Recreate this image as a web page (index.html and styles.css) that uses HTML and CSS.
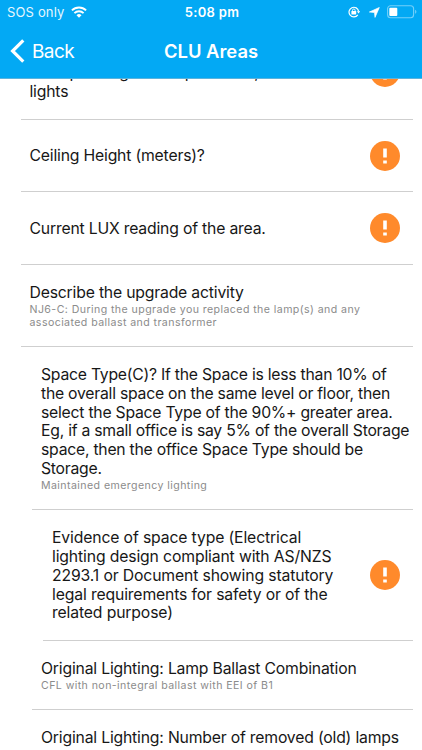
FILE: index.html
```html
<!DOCTYPE html>
<html lang="en">
<head>
    <meta charset="UTF-8">
    <meta name="viewport" content="width=device-width, initial-scale=1.0">
    <title>CLU Areas</title>
    <link rel="stylesheet" href="styles.css">
</head>
<body>

    <div class="screen">
        <header class="top">
            <div class="status-bar">
                <div class="status-left">
                    <span class="carrier">SOS only</span>
                    <svg class="wifi" width="16" height="12" viewBox="0 0 16 12">
                        <g fill="none" stroke="#fff" stroke-width="1.9">
                            <path d="M.9 4.4a10.2 10.2 0 0 1 14.2 0"/>
                            <path d="M3.4 7.1a6.6 6.6 0 0 1 9.2 0"/>
                        </g>
                        <path d="M8 11.8 5.5 9.2a3.6 3.6 0 0 1 5 0z" fill="#fff"/>
                    </svg>
                </div>
                <span class="clock">5:08 pm</span>
                <div class="status-right">
                    <svg width="12" height="12" viewBox="0 0 12 12">
                        <path d="M9.8 8.8A4.8 4.8 0 1 1 10.6 5.4" fill="none" stroke="#fff" stroke-width="1.2"/>
                        <path d="M8.9 5.3h3.2L10.5 7.5z" fill="#fff"/>
                        <rect x="3.4" y="5.1" width="4.8" height="3.5" rx=".5" fill="#fff"/>
                        <path d="M4.5 5.4V4.3a1.3 1.3 0 0 1 2.6 0v1.1" fill="none" stroke="#fff" stroke-width=".9"/>
                    </svg>
                    <svg class="arrow" width="11" height="11" viewBox="0 0 11 11">
                        <path d="M10.3.5 6 10.4 5.5 5.5.4 5z" fill="#fff" stroke="#fff" stroke-width=".7" stroke-linejoin="round"/>
                    </svg>
                    <svg class="battery" width="31" height="14" viewBox="0 0 31 14">
                        <rect x=".6" y=".8" width="26" height="12" rx="3" fill="none" stroke="#fff" stroke-opacity=".45" stroke-width="1.1"/>
                        <rect x="2.3" y="2.7" width="8" height="8.2" rx="1" fill="#fff"/>
                        <path d="M28.2 4.8a2.3 2.3 0 0 1 0 4z" fill="#fff" fill-opacity=".5"/>
                    </svg>
                </div>
            </div>
            <nav class="nav-bar">
                <a class="back">
                    <svg width="15" height="24" viewBox="0 0 15 24">
                        <path d="M13.3 1.4 2.6 12l10.7 10.6" fill="none" stroke="#fff" stroke-width="3.2"/>
                    </svg>
                    <span>Back</span>
                </a>
                <h1>CLU Areas</h1>
            </nav>
        </header>

        <main class="list">
            <section class="row row-clipped">
                <div class="text"><p class="title">Example range in lamps or LED,<br>lights</p></div>
                <svg class="alert" viewBox="0 0 30 30"><circle cx="15" cy="15" r="15"/><path d="M13.2 7.6h3.6v9h-3.6zM13.2 19.4h3.6v3.2h-3.6z"/></svg>
            </section>
            <section class="row row-height">
                <div class="text"><p class="title">Ceiling Height (meters)?</p></div>
                <svg class="alert" viewBox="0 0 30 30"><circle cx="15" cy="15" r="15"/><path d="M13.2 7.6h3.6v9h-3.6zM13.2 19.4h3.6v3.2h-3.6z"/></svg>
            </section>
            <section class="row row-lux">
                <div class="text"><p class="title">Current LUX reading of the area.</p></div>
                <svg class="alert" viewBox="0 0 30 30"><circle cx="15" cy="15" r="15"/><path d="M13.2 7.6h3.6v9h-3.6zM13.2 19.4h3.6v3.2h-3.6z"/></svg>
            </section>
            <section class="row row-activity">
                <div class="text">
                    <p class="title">Describe the upgrade activity</p>
                    <p class="answer">NJ6-C: During the upgrade you replaced the lamp(s) and any<br>associated ballast and transformer</p>
                </div>
            </section>
            <section class="row row-space level-1">
                <div class="text">
                    <p class="title">Space Type(C)? If the Space is less than 10% of<br>the overall space on the same level or floor, then<br>select the Space Type of the 90%+ greater area.<br>Eg, if a small office is say 5% of the overall Storage<br>space, then the office Space Type should be<br>Storage.</p>
                    <p class="answer">Maintained emergency lighting</p>
                </div>
            </section>
            <section class="row row-evidence level-2">
                <div class="text"><p class="title">Evidence of space type (Electrical<br>lighting design compliant with AS/NZS<br>2293.1 or Document showing statutory<br>legal requirements for safety or of the<br>related purpose)</p></div>
                <svg class="alert" viewBox="0 0 30 30"><circle cx="15" cy="15" r="15"/><path d="M13.2 7.6h3.6v9h-3.6zM13.2 19.4h3.6v3.2h-3.6z"/></svg>
            </section>
            <section class="row row-ballast level-1">
                <div class="text">
                    <p class="title">Original Lighting: Lamp Ballast Combination</p>
                    <p class="answer">CFL with non-integral ballast with EEI of B1</p>
                </div>
            </section>
            <section class="row row-removed level-1">
                <div class="text"><p class="title">Original Lighting: Number of removed (old) lamps</p></div>
            </section>
        </main>
    </div>

</body>
</html>
```
FILE: styles.css
```css
* {
    box-sizing: border-box;
}
body {
    margin: 0;
    background-color: #fff;
    color: #171717;
    font-family: Inter, Roboto, sans-serif;
}
h1, p {
    margin: 0;
}
svg {
    display: block;
    flex-shrink: 0;
}
.screen {
    height: 750px;
    overflow: hidden;
    display: flex;
    flex-direction: column;
}

/* Header */
.top {
    height: 79px;
    flex-shrink: 0;
    background-color: #03a9f4;
    border-bottom: 1px solid #5db3dc;
    color: #fff;
}
.status-bar {
    height: 24px;
    display: grid;
    grid-template-columns: 1fr auto 1fr;
    align-items: center;
    padding: 0 7px;
    font-size: 13px;
}
.status-left, .status-right {
    display: flex;
    align-items: center;
}
.carrier {
    letter-spacing: 0.15px;
    opacity: 0.9;
}
.wifi {
    margin-left: 7px;
}
.clock {
    font-weight: 600;
    letter-spacing: 0.3px;
    padding-left: 2px;
}
.status-right {
    justify-content: flex-end;
}
.arrow {
    margin: 0 7px 0 9px;
}
.battery {
    margin-right: -2.5px;
}
.nav-bar {
    height: 54px;
    display: grid;
    grid-template-columns: 1fr auto 1fr;
    align-items: center;
    padding: 0 10px;
}
.back {
    display: flex;
    align-items: center;
    gap: 7px;
    font-size: 19px;
    letter-spacing: -0.6px;
}
.nav-bar h1 {
    font-size: 18.4px;
    font-weight: 600;
}

/* Question list */
.list {
    flex: 1;
    min-height: 0;
    overflow: hidden;
}
.row {
    display: flex;
    justify-content: space-between;
    margin: 0 9px 0 21px;
    padding: 0 13px 0 8.5px;
    border-bottom: 1px solid #cfcfcf;
}
.level-1 {
    margin-left: 32px;
    padding-left: 9px;
}
.level-2 {
    margin-left: 43px;
    padding-left: 9px;
}
.title {
    font-size: 15.75px;
    line-height: 18.7px;
    letter-spacing: -0.19px;
    white-space: nowrap;
}
.answer {
    font-size: 10.6px;
    line-height: 13px;
    letter-spacing: 0.42px;
    color: #8b8b8b;
    white-space: nowrap;
    padding-top: 0.5px;
}
.alert {
    width: 30px;
    height: 30px;
    align-self: center;
}
.alert circle {
    fill: #ff8a2b;
}
.alert path {
    fill: #fff;
}

/* The first row is scrolled partly under the header */
.row-clipped {
    height: 95px;
    margin-top: -54px;
    align-items: center;
}
.row-clipped .text {
    padding-top: 22px;
}
.row-height {
    height: 72px;
    align-items: center;
}
.row-lux {
    height: 72.5px;
    align-items: center;
}
.row-height .text,
.row-lux .text,
.row-evidence .text {
    padding-top: 3px;
}
.row-height .text {
    padding-top: 2px;
}
.row-activity {
    height: 82.5px;
    padding-top: 19px;
}
.row-space {
    height: 163px;
    padding-top: 19px;
}
.row-space .title {
    line-height: 18.8px;
    letter-spacing: -0.24px;
}
.row-evidence {
    height: 130.5px;
    align-items: center;
}
.row-evidence .title {
    letter-spacing: -0.14px;
}
.row-ballast {
    height: 69.5px;
    padding-top: 19px;
}
.row-removed {
    height: 60px;
    padding-top: 19px;
}
```
